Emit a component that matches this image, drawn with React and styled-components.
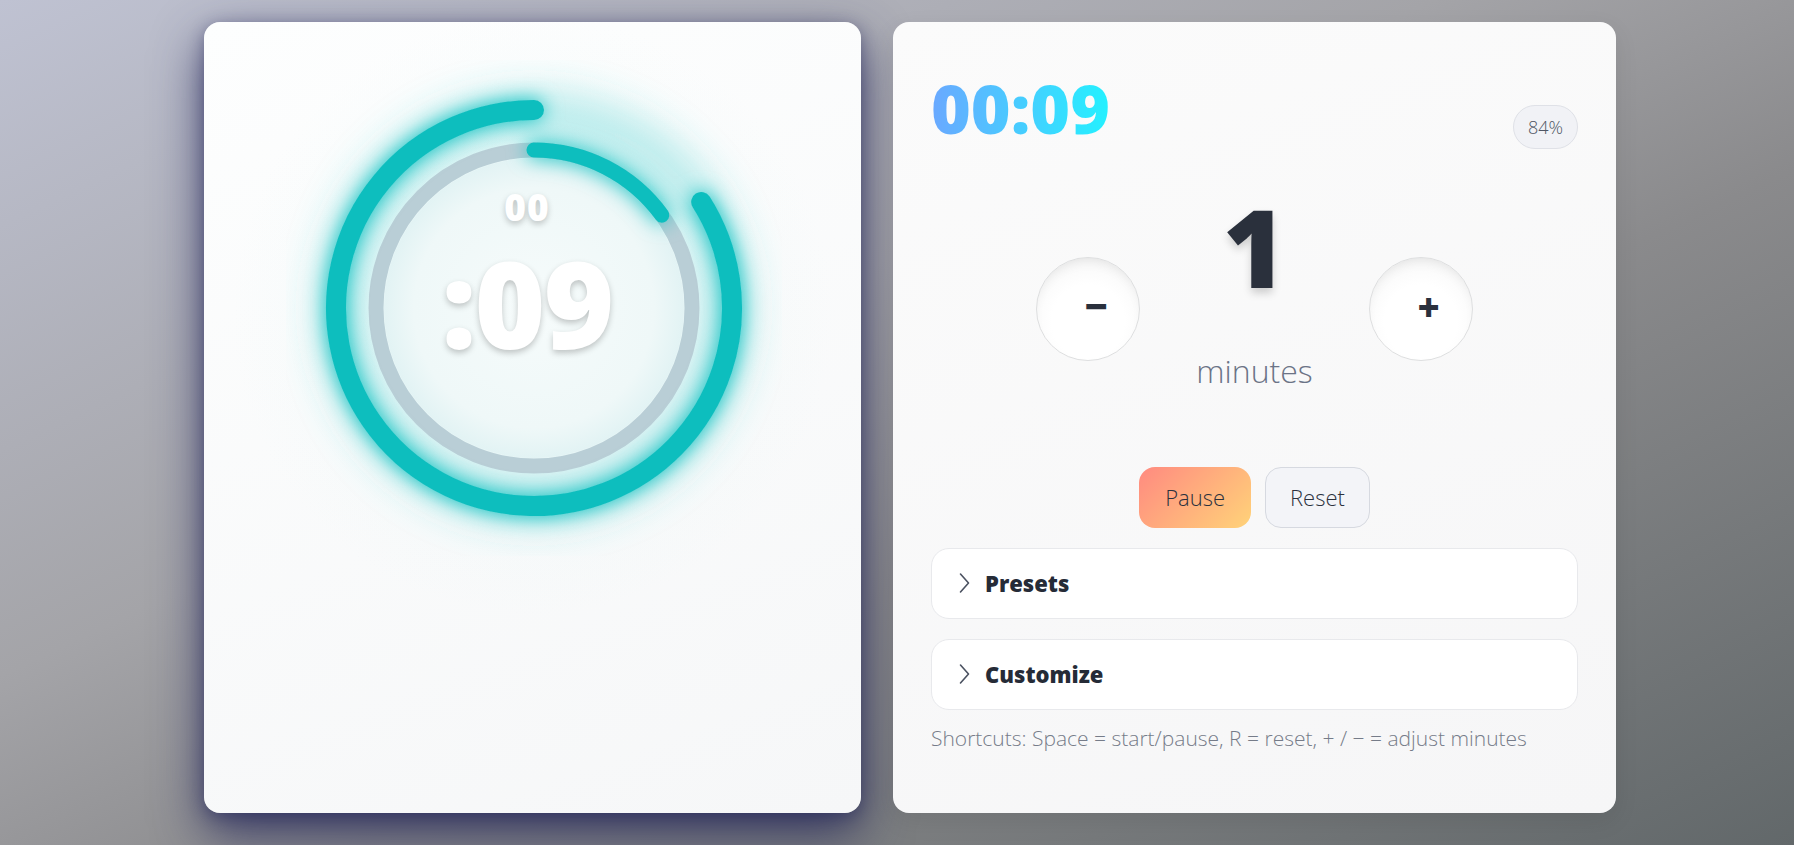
import React from 'react';
import styled, { createGlobalStyle } from 'styled-components';

const Global = createGlobalStyle`
  html, body { margin: 0; padding: 0; }
  body {
    font-family: "Open Sans", "Noto Sans", sans-serif;
    -webkit-font-smoothing: antialiased;
  }
  * { box-sizing: border-box; }
`;

const Page = styled.div`
  width: 1794px;
  height: 845px;
  overflow: hidden;
  display: flex;
  gap: 32px;
  padding: 22px 178px 32px 204px;
  background: linear-gradient(to bottom right, #bfc2d2 0%, #a4a4a8 40%, #8a8a8c 60%, #62686a 100%);
`;

const LeftCard = styled.section`
  width: 657px;
  border-radius: 16px;
  background:
    radial-gradient(circle at 50% 37%, rgba(225, 245, 245, 0.45) 0, rgba(240, 248, 248, 0) 300px),
    linear-gradient(160deg, #fdfefe 0%, #f6f7f8 100%);
  box-shadow: 0 20px 50px rgba(32, 34, 88, 0.78), 0 4px 16px rgba(32, 34, 88, 0.4);
  padding-top: 38px;
  display: flex;
  flex-direction: column;
  align-items: center;
`;

const RingWrap = styled.div`
  position: relative;
  width: 496px;
  height: 496px;
  margin-left: 2px;
`;

const RingOverlay = styled.div`
  position: absolute;
  inset: 0;
  display: flex;
  flex-direction: column;
  align-items: center;
  padding-top: 128px;
  padding-right: 13px;
  color: #ffffff;
  font-weight: 800;
  text-shadow: 0 3px 6px rgba(0, 0, 0, 0.22);
`;

const RingMinutes = styled.div`
  font-size: 37px;
  line-height: 1;
  letter-spacing: 1px;
  margin-bottom: 17px;
`;

const RingSeconds = styled.div`
  font-size: 121px;
  line-height: 1;
  letter-spacing: -2px;
`;

const RightCard = styled.section`
  width: 723px;
  border-radius: 16px;
  background: linear-gradient(160deg, #fbfbfb 0%, #f6f6f7 100%);
  box-shadow: 0 8px 24px rgba(0, 0, 0, 0.08);
  padding: 45px 38px 0 38px;
  display: flex;
  flex-direction: column;
`;

const Header = styled.div`
  display: flex;
  justify-content: space-between;
  align-items: flex-end;
`;

const TimerText = styled.div`
  font-size: 68px;
  line-height: 1.2;
  font-weight: 800;
  background: linear-gradient(90deg, #6aa8ff 0%, #22f3ff 100%);
  -webkit-background-clip: text;
  background-clip: text;
  color: transparent;
  padding-right: 4px;
`;

const Badge = styled.div`
  height: 44px;
  padding: 0 14px;
  display: flex;
  align-items: center;
  border-radius: 22px;
  background: #f1f2f6;
  border: 1px solid #dfe1e7;
  color: #4f5664;
  font-size: 18px;
  font-weight: 300;
`;

const Stepper = styled.div`
  display: flex;
  justify-content: center;
  align-items: flex-start;
  gap: 56px;
  margin-top: 44px;
`;

const RoundButton = styled.button`
  width: 104px;
  height: 104px;
  margin-top: 64px;
  border-radius: 50%;
  border: 1px solid #dedfe0;
  background: radial-gradient(circle at 50% 62%, #ffffff 45%, #f4f4f4 100%);
  box-shadow: inset 0 8px 14px -8px rgba(0, 0, 0, 0.12);
  display: flex;
  align-items: center;
  justify-content: center;
  padding: 0 0 5px 16px;
  font-family: "Open Sans", sans-serif;
  font-size: ${p => p.$size}px;
  font-weight: 800;
  color: #2a303c;
  line-height: 1;
  cursor: pointer;
`;

const ValueColumn = styled.div`
  display: flex;
  flex-direction: column;
  align-items: center;
`;

const BigValue = styled.div`
  font-size: 108px;
  line-height: 1;
  font-weight: 800;
  color: #2a303c;
  text-shadow: 0 5px 8px rgba(0, 0, 0, 0.18);
`;

const Unit = styled.div`
  font-size: 32px;
  line-height: 1.2;
  font-weight: 300;
  color: #6b7386;
  margin-top: 51px;
`;

const Actions = styled.div`
  display: flex;
  justify-content: center;
  gap: 14px;
  margin-top: 77px;
`;

const ActionButton = styled.button`
  height: 61px;
  padding: 0 ${p => (p.$primary ? 26 : 24)}px;
  border-radius: 16px;
  border: ${p => (p.$primary ? 'none' : '1px solid #d6d9e0')};
  background: ${p => (p.$primary ? 'linear-gradient(135deg, #ff8a80 0%, #ffd379 100%)' : '#f3f4f8')};
  font-family: "Open Sans", sans-serif;
  font-size: 22px;
  font-weight: 300;
  color: #2b313d;
  cursor: pointer;
`;

const Accordion = styled.div`
  margin-top: ${p => p.$gap}px;
  height: 71px;
  border-radius: 18px;
  border: 1px solid #e8e9ec;
  background: #ffffff;
  display: flex;
  align-items: center;
  gap: 14px;
  padding: 0 26px;
`;

const AccordionTitle = styled.span`
  font-size: 22px;
  font-weight: 800;
  color: #252b37;
`;

const Hint = styled.p`
  margin: 14px 0 0;
  font-size: 21px;
  line-height: 1.4;
  font-weight: 300;
  color: #767c89;
`;

const C = 248;
const pt = (r, deg) => {
  const a = (deg * Math.PI) / 180;
  return [C + r * Math.sin(a), C - r * Math.cos(a)];
};
const arc = (r, from, to) => {
  const [x1, y1] = pt(r, from);
  const [x2, y2] = pt(r, to);
  const large = to - from > 180 ? 1 : 0;
  return `M ${x1.toFixed(2)} ${y1.toFixed(2)} A ${r} ${r} 0 ${large} 1 ${x2.toFixed(2)} ${y2.toFixed(2)}`;
};

function Ring() {
  const outerFrom = 360 * 0.16;
  const innerTo = 360 * 0.15;
  return (
    <svg width="496" height="496" viewBox="0 0 496 496">
      <defs>
        <filter id="halo" x="-30%" y="-30%" width="160%" height="160%">
          <feGaussianBlur stdDeviation="18" />
        </filter>
        <filter id="glow" x="-30%" y="-30%" width="160%" height="160%">
          <feGaussianBlur in="SourceGraphic" stdDeviation="10" result="b" />
          <feMerge>
            <feMergeNode in="b" />
            <feMergeNode in="SourceGraphic" />
          </feMerge>
        </filter>
        <radialGradient id="disc" cx="50%" cy="50%" r="50%">
          <stop offset="0%" stopColor="#f6fbfb" />
          <stop offset="80%" stopColor="#eff8f8" />
          <stop offset="100%" stopColor="#e2f3f4" />
        </radialGradient>
      </defs>
      <circle cx={C} cy={C} r="192" fill="none" stroke="#3acccc" strokeOpacity="0.32" strokeWidth="52" filter="url(#halo)" />
      <circle cx={C} cy={C} r="150" fill="url(#disc)" />
      <circle cx={C} cy={C} r="158" fill="none" stroke="#b9ced6" strokeWidth="15" />
      <g filter="url(#glow)">
        <path d={arc(198, outerFrom, 360)} fill="none" stroke="#10bebe" strokeWidth="20" strokeLinecap="round" />
        <path d={arc(158, 0, innerTo)} fill="none" stroke="#10bebe" strokeWidth="15" strokeLinecap="round" />
      </g>
    </svg>
  );
}

function Chevron() {
  return (
    <svg width="13" height="22" viewBox="0 0 13 22">
      <polyline points="2.5,2 10.5,11 2.5,20" fill="none" stroke="#4a5160" strokeWidth="1.6" strokeLinecap="round" strokeLinejoin="round" />
    </svg>
  );
}

export default function App() {
  return (
    <>
      <Global />
      <Page>
        <LeftCard>
          <RingWrap>
            <Ring />
            <RingOverlay>
              <RingMinutes>00</RingMinutes>
              <RingSeconds>:09</RingSeconds>
            </RingOverlay>
          </RingWrap>
        </LeftCard>
        <RightCard>
          <Header>
            <TimerText>00:09</TimerText>
            <Badge>84%</Badge>
          </Header>
          <Stepper>
            <RoundButton $size={40} aria-label="decrease">−</RoundButton>
            <ValueColumn>
              <BigValue>1</BigValue>
              <Unit>minutes</Unit>
            </ValueColumn>
            <RoundButton $size={38} aria-label="increase">+</RoundButton>
          </Stepper>
          <Actions>
            <ActionButton $primary>Pause</ActionButton>
            <ActionButton>Reset</ActionButton>
          </Actions>
          <Accordion $gap={20}>
            <Chevron />
            <AccordionTitle>Presets</AccordionTitle>
          </Accordion>
          <Accordion $gap={20}>
            <Chevron />
            <AccordionTitle>Customize</AccordionTitle>
          </Accordion>
          <Hint>Shortcuts: Space = start/pause, R = reset, + / − = adjust minutes</Hint>
        </RightCard>
      </Page>
    </>
  );
}
